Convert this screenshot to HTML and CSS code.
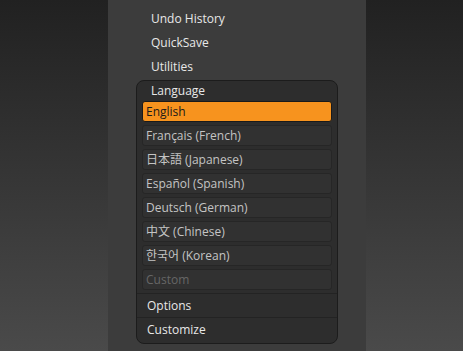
FILE: index.html
```html
<!DOCTYPE html>
<html lang="en">
<head>
    <meta charset="UTF-8">
    <meta name="viewport" content="width=device-width, initial-scale=1.0">
    <title>Menu</title>
    <link rel="stylesheet" href="styles.css">
</head>
<body>

    <div class="panel">
        <div class="menu-item">Undo History</div>
        <div class="menu-item">QuickSave</div>
        <div class="menu-item">Utilities</div>

        <div class="group">
            <div class="group-title">Language</div>
            <div class="lang-list">
                <div class="lang active">English</div>
                <div class="lang">Français (French)</div>
                <div class="lang">日本語 (Japanese)</div>
                <div class="lang">Español (Spanish)</div>
                <div class="lang">Deutsch (German)</div>
                <div class="lang">中文 (Chinese)</div>
                <div class="lang">한국어 (Korean)</div>
                <div class="lang disabled">Custom</div>
            </div>
            <div class="group-item">Options</div>
            <div class="group-item">Customize</div>
        </div>
    </div>

</body>
</html>
```

FILE: styles.css
```css
html, body {
    height: 100%;
}
body {
    margin: 0;
    font-family: "Open Sans", "Noto Sans CJK JP", "Noto Sans CJK KR", sans-serif;
    font-size: 12px;
    background: linear-gradient(#212121, #4a4a4a);
    display: flex;
}
.panel {
    margin-left: 108px;
    width: 258px;
    height: 100%;
    background: #3c3c3c;
    padding-top: 7px;
    box-sizing: border-box;
}
.menu-item {
    height: 24px;
    line-height: 24px;
    padding-left: 43px;
    color: #e8e8e8;
}
.group {
    margin: 1px 0 0 28px;
    width: 202px;
    box-sizing: border-box;
    border: 1px solid #1c1c1c;
    border-radius: 8px;
    background: #2d2d2d;
    padding-bottom: 2px;
}
.group-title {
    height: 20px;
    line-height: 19px;
    padding-left: 14px;
    color: #e8e8e8;
}
.lang-list {
    display: flex;
    flex-direction: column;
    gap: 3px;
    padding: 0 5px 3px;
}
.lang {
    height: 21px;
    line-height: 20px;
    box-sizing: border-box;
    border: 1px solid #262626;
    border-radius: 3px;
    background: #313131;
    padding-left: 3px;
    color: #c4c4c4;
}
.lang.active {
    background: #f7931e;
    border-color: #1a1a1a;
    color: #1a1a1a;
}
.lang.disabled {
    color: #666;
}
.group-item {
    height: 23px;
    line-height: 23px;
    border-top: 1px solid #232323;
    padding-left: 10px;
    color: #e8e8e8;
}
```
